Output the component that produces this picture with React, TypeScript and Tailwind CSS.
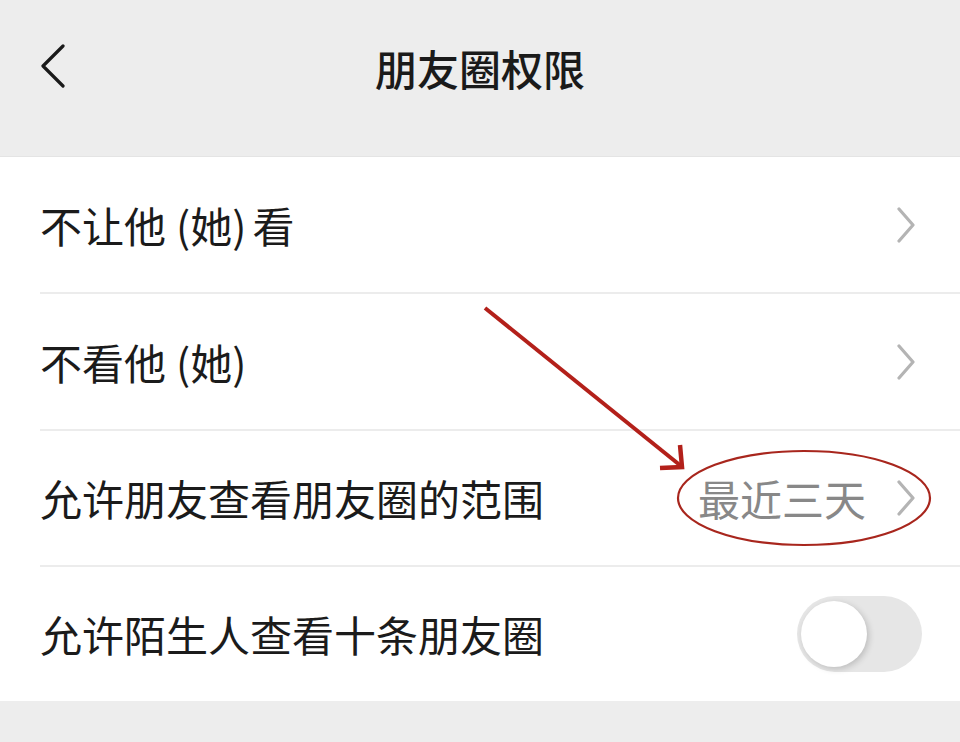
import React from 'react';

const font = { fontFamily: '"Noto Sans CJK SC", "Noto Sans", sans-serif' };

function Chevron() {
  return (
    <svg width="20" height="36" viewBox="0 0 20 36" fill="none">
      <polyline points="3,2 17,18 3,34" stroke="#b4b4b4" strokeWidth="3.2" strokeLinecap="round" strokeLinejoin="round" />
    </svg>
  );
}

function Row({ label, value, h }: { label: React.ReactNode; value?: string; h: string }) {
  return (
    <div className="pl-10">
      <div className={`${h} flex items-center justify-between pr-[44px] border-b-2 border-[#ececec]`}>
        <span className="text-[42px] leading-none text-[#1b1b1b]">{label}</span>
        <div className="flex items-center gap-[30px]">
          {value && <span className="text-[42px] leading-none text-[#888888] ml-[2px]">{value}</span>}
          <Chevron />
        </div>
      </div>
    </div>
  );
}

export default function App() {
  return (
    <div className="relative w-[960px] h-[742px] bg-[#ededed] overflow-hidden" style={font}>
      {/* 顶部导航 */}
      <div className="h-[136px] flex items-center px-10 relative">
        <svg width="26" height="44" viewBox="0 0 26 44" fill="none" className="-mt-[4px]">
          <polyline points="23,2 3,22 23,42" stroke="#1a1a1a" strokeWidth="3.2" strokeLinecap="round" strokeLinejoin="round" />
        </svg>
        <div className="flex-1 text-center text-[42px] font-medium text-[#1a1a1a] leading-none -ml-[26px]">朋友圈权限</div>
      </div>

      {/* 列表 */}
      <div className="mt-[20px] bg-white border-t border-[#e4e4e4]">
        <Row
          h="h-[137px]"
          label={
            <>
              不让他<span className="ml-[10px]">(她)</span>
              <span className="ml-[6px]">看</span>
            </>
          }
        />
        <Row
          h="h-[137px]"
          label={
            <>
              不看他<span className="ml-[10px]">(她)</span>
            </>
          }
        />
        <Row h="h-[136px]" label="允许朋友查看朋友圈的范围" value="最近三天" />
        <div className="pl-10">
          <div className="h-[134px] flex items-center justify-between pr-[38px]">
            <span className="text-[42px] leading-none text-[#1b1b1b]">允许陌生人查看十条朋友圈</span>
            <div className="w-[125px] h-[76px] rounded-full bg-[#e6e6e6] flex items-center pl-[4px]">
              <div className="w-[66px] h-[66px] rounded-full bg-white shadow-[2px_2px_6px_rgba(0,0,0,0.18)]" />
            </div>
          </div>
        </div>
      </div>

      {/* 标注 */}
      <svg className="absolute inset-0 pointer-events-none" width="960" height="742" viewBox="0 0 960 742" fill="none">
        <line x1="485" y1="308" x2="681" y2="466" stroke="#b3201a" strokeWidth="4" />
        <polyline points="680,445 682,467 660,468" stroke="#b3201a" strokeWidth="4.5" />
        <ellipse cx="804" cy="498" rx="126" ry="47" stroke="#a8261d" strokeWidth="2.2" />
      </svg>
    </div>
  );
}
